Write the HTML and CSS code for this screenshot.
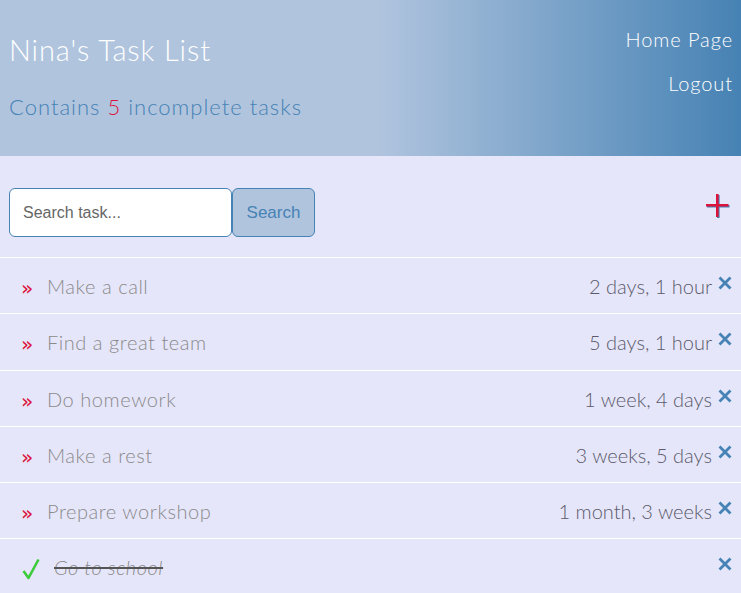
FILE: index.html
```html
<!DOCTYPE html>
<html>
<head>
<meta charset="utf-8">
<link rel="stylesheet" href="styles.css">
</head>
<body>
<header class="header">
  <div class="brand">
    <h1 class="title">Nina's Task List</h1>
    <p class="subtitle">Contains <span class="count">5</span> incomplete tasks</p>
  </div>
  <nav class="nav">
    <a class="nav-link" href="#">Home Page</a>
    <a class="nav-link" href="#">Logout</a>
  </nav>
</header>
<section class="toolbar">
  <form class="search">
    <input class="search-input" type="text" placeholder="Search task...">
    <button class="search-btn" type="button">Search</button>
  </form>
  <svg class="add" width="25" height="26" viewBox="0 0 25 26">
    <g fill="#4682B4">
      <rect x="11" y="2" width="2.6" height="23"/>
      <rect x="1" y="12" width="22.5" height="2.5"/>
    </g>
    <g fill="#DC143C">
      <rect x="10" y="1" width="2.6" height="23"/>
      <rect x="0" y="11" width="22.5" height="2.5"/>
    </g>
  </svg>
</section>
<ul class="tasks">
  <li class="task"><span class="mark">»</span><span class="name">Make a call</span><span class="time">2 days, 1 hour</span><svg class="del" width="14" height="14" viewBox="0 0 14 14"><path d="M1.5 1.5 L12.5 12.5 M12.5 1.5 L1.5 12.5"/></svg></li>
  <li class="task"><span class="mark">»</span><span class="name">Find a great team</span><span class="time">5 days, 1 hour</span><svg class="del" width="14" height="14" viewBox="0 0 14 14"><path d="M1.5 1.5 L12.5 12.5 M12.5 1.5 L1.5 12.5"/></svg></li>
  <li class="task"><span class="mark">»</span><span class="name">Do homework</span><span class="time">1 week, 4 days</span><svg class="del" width="14" height="14" viewBox="0 0 14 14"><path d="M1.5 1.5 L12.5 12.5 M12.5 1.5 L1.5 12.5"/></svg></li>
  <li class="task"><span class="mark">»</span><span class="name">Make a rest</span><span class="time">3 weeks, 5 days</span><svg class="del" width="14" height="14" viewBox="0 0 14 14"><path d="M1.5 1.5 L12.5 12.5 M12.5 1.5 L1.5 12.5"/></svg></li>
  <li class="task"><span class="mark">»</span><span class="name">Prepare workshop</span><span class="time">1 month, 3 weeks</span><svg class="del" width="14" height="14" viewBox="0 0 14 14"><path d="M1.5 1.5 L12.5 12.5 M12.5 1.5 L1.5 12.5"/></svg></li>
  <li class="task done"><svg class="check" width="18" height="22" viewBox="0 0 18 22"><path d="M1.5 13 L6.5 20 L16.5 1.5"/></svg><span class="name">Go to school</span><span class="time"></span><svg class="del" width="14" height="14" viewBox="0 0 14 14"><path d="M1.5 1.5 L12.5 12.5 M12.5 1.5 L1.5 12.5"/></svg></li>
</ul>
</body>
</html>
```
FILE: styles.css
```css
html, body {
  margin: 0;
  padding: 0;
  background: #E6E6FA;
  font-family: "Lato", "Open Sans", sans-serif;
  font-weight: 300;
}
.header {
  display: flex;
  justify-content: space-between;
  height: 156px;
  background: linear-gradient(90deg, #B0C4DE 51%, #4682B4 100%);
  box-sizing: border-box;
}
.brand {
  padding-left: 9px;
  padding-top: 31px;
}
.title {
  margin: 0;
  font-size: 29px;
  font-weight: 300;
  color: #fff;
  line-height: 38px;
  letter-spacing: 0.9px;
}
.subtitle {
  margin: 23px 0 0;
  font-size: 22px;
  color: #4682B4;
  line-height: 30px;
  letter-spacing: 1px;
}
.count { color: #DC143C; }
.nav {
  display: flex;
  flex-direction: column;
  align-items: flex-end;
  padding-right: 8px;
  padding-top: 26px;
  gap: 18px;
}
.nav-link {
  color: #fff;
  text-decoration: none;
  font-size: 20px;
  line-height: 26px;
  letter-spacing: 0.9px;
}
.toolbar {
  display: flex;
  justify-content: space-between;
  align-items: center;
  padding: 32px 10px 20px 9px;
  border-bottom: 1px solid #fff;
}
.search { display: flex; margin: 0; }
.search-input {
  width: 223px;
  height: 49px;
  box-sizing: border-box;
  border: 1px solid #4682B4;
  border-radius: 6px;
  padding: 0 13px;
  font-family: "Liberation Sans", Arial, sans-serif;
  font-size: 16px;
  background: #fff;
  outline: none;
}
.search-input::placeholder { color: #666; }
.search-btn {
  width: 83px;
  height: 49px;
  box-sizing: border-box;
  border: 1px solid #4682B4;
  border-radius: 6px;
  background: #B0C4DE;
  color: #4682B4;
  font-family: "Liberation Sans", Arial, sans-serif;
  font-size: 17px;
  padding: 0;
}
.add { display: block; margin-top: -14px; }
.tasks {
  list-style: none;
  margin: 0;
  padding: 0;
}
.task {
  display: flex;
  align-items: center;
  height: 55px;
  border-bottom: 1px solid #fff;
  padding: 0 9px 0 21px;
  font-size: 20px;
}
.task:nth-child(2) { height: 56px; }
.mark {
  color: #DC143C;
  width: 26px;
  font-family: "DejaVu Sans", sans-serif;
  font-weight: 400;
  font-size: 20px;
  position: relative;
  top: 2px;
}
.name { color: #8a8a8a; flex: 1; letter-spacing: 0.55px; }
.time { color: #5a5a6a; }
.del {
  margin-left: 6px;
  position: relative;
  top: -3px;
  fill: none;
  stroke: #4682B4;
  stroke-width: 2.8;
}
.check {
  margin-right: 14px;
  margin-left: 1px;
  position: relative;
  top: 2px;
  fill: none;
  stroke: #3BCB3B;
  stroke-width: 2.6;
  stroke-linejoin: round;
}
.done .name {
  font-style: italic;
  text-decoration: line-through;
  text-decoration-color: #555;
}
```
